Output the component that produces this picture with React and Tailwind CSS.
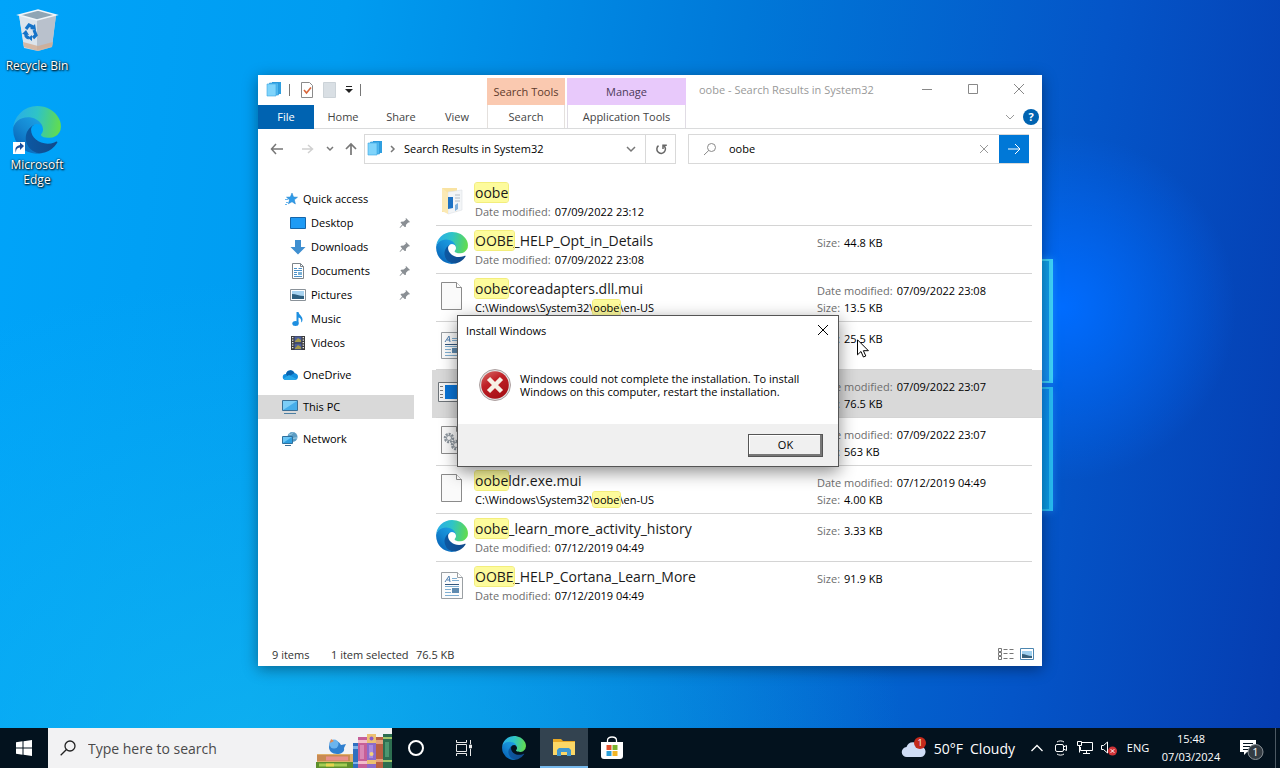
import React, { useId } from 'react';

const EdgeIcon = ({ className }) => {
  const id = useId();
  return (
    <svg className={className} viewBox="4 5 257 257" aria-hidden="true">
      <defs>
        <linearGradient id={`${id}a`} x1="63" y1="178" x2="241" y2="178" gradientUnits="userSpaceOnUse">
          <stop offset="0" stopColor="#0c59a4" />
          <stop offset="1" stopColor="#114a8b" />
        </linearGradient>
        <linearGradient id={`${id}b`} x1="157" y1="100" x2="46" y2="221" gradientUnits="userSpaceOnUse">
          <stop offset="0" stopColor="#1b9de2" />
          <stop offset="0.5" stopColor="#1588d2" />
          <stop offset="1" stopColor="#0a6bbd" />
        </linearGradient>
        <linearGradient id={`${id}c`} x1="20" y1="90" x2="250" y2="130" gradientUnits="userSpaceOnUse">
          <stop offset="0" stopColor="#2ab0e4" />
          <stop offset="0.45" stopColor="#2fc4c6" />
          <stop offset="0.8" stopColor="#4ed27a" />
          <stop offset="1" stopColor="#62dc50" />
        </linearGradient>
      </defs>
      <path fill={`url(#${id}a)`} d="M235.68 195.46a93.73 93.73 0 0 1-10.54 4.71 101.87 101.87 0 0 1-35.9 6.46c-47.32 0-88.54-32.55-88.54-74.32A31.48 31.48 0 0 1 117.13 105c-42.8 1.8-53.8 46.4-53.8 72.53 0 73.88 68.09 81.37 82.76 81.37 7.91 0 19.84-2.3 27-4.56l1.31-.44a128.34 128.34 0 0 0 66.6-52.8 4 4 0 0 0-5.32-5.64Z" />
      <path fill={`url(#${id}b)`} d="M110.34 246.34A79.2 79.2 0 0 1 87.6 225a80.72 80.72 0 0 1 29.53-120c3.12-1.47 8.45-4.13 15.54-4a32.35 32.35 0 0 1 25.69 13 31.88 31.88 0 0 1 6.36 18.66c0-.21 24.46-79.6-80-79.6-43.9 0-80 41.66-80 78.21a130.15 130.15 0 0 0 12.11 56 128 128 0 0 0 156.38 67.11 75.55 75.55 0 0 1-62.78-8Z" />
      <path fill={`url(#${id}c)`} d="M156.94 153.78c-.81 1.05-3.3 2.5-3.3 5.66 0 2.61 1.7 5.12 4.72 7.23 14.38 10 41.49 8.68 41.56 8.68a59.56 59.56 0 0 0 30.27-8.35 61.38 61.38 0 0 0 30.43-52.88c.26-22.41-8-37.31-11.34-43.91C228.09 28.76 182.35 5.19 132.61 5.19a128 128 0 0 0-128 126.2c.48-36.54 36.8-66.05 80-66.05 3.5 0 23.46.34 42 10.07 16.34 8.58 24.9 18.94 30.85 29.21 6.18 10.67 7.28 24.15 7.28 29.52s-2.74 13.33-7.8 19.64Z" />
    </svg>
  );
};

const RecycleBinIcon = () => (
  <svg className="w-12 h-12" viewBox="0 0 48 48" aria-hidden="true">
    <path d="M6 8 25 3l18 5-4 32-14 4-14-3Z" fill="#cfd8e2" />
    <path d="m6 8 18 5v30l-13-3Z" fill="#dce4ec" />
    <path d="m43 8-19 5v30l15-4Z" fill="#b9c1cc" />
    <path d="m10 35 1 5 14 4 14-4 1-5-15 4Z" fill="#d3a98d" opacity=".75" />
    <path d="M6 8 25 3l18 5-19 5Z" fill="#8fa5b5" stroke="#f0f5f9" strokeWidth="1.5" />
    <g fill="none" stroke="#1673c8" strokeWidth="3.2">
      <path d="m13 22 3-4 4 2" />
      <path d="m21 23 2 5-3 3" />
      <path d="M16 31c-3-1-4-3-3-5" />
    </g>
    <path d="m17 22 6 1-1-6ZM19 28v6l-4-3ZM9 27l4-4 3 5Z" fill="#1673c8" />
  </svg>
);

const SearchStackIcon = () => (
  <svg className="w-4 h-4 shrink-0 mb-[2px]" viewBox="0 0 16 16" aria-hidden="true">
    <path d="M6 1h9v12H6z" fill="#2f9fe0" />
    <path d="M3.500 2h9v12h-9z" fill="#4fb8ef" stroke="#2691d4" strokeWidth=".6" />
    <path d="M1 3h9v12H1z" fill="#80d4fb" stroke="#3aa5e2" strokeWidth=".6" />
  </svg>
);

const PinIcon = () => (
  <svg className="w-3 h-3 shrink-0" viewBox="0 0 12 12" aria-hidden="true">
    <path d="m7 1 4 4-1 .6-.8-.1L7 7.700l-.2 2.300L5.700 10 3.800 8.200 1 11l-.4-.4 2.600-3L1.500 5.500l.6-.8 2.600-.1L7 2.500l-.4-1Z" fill="#8a8f94" />
  </svg>
);

const navIcons = {
  star: (
    <>
      <path d="m10 2 1.500 4 4 .2-3.200 2.600 1.100 4.200-3.400-2.200-3.700 2 1.300-3.900L4.500 6.200l3.800-.2Z" fill="#2f9be8" stroke="#1f80cc" strokeWidth=".5" />
      <path d="M3 8.500h3M4 11.500h2M3 13.500h2" stroke="#6ab7ee" />
    </>
  ),
  desktop: <path d="M.5 2.500h15v11H.5z" fill="#1e9bf5" stroke="#1565a9" />,
  downloads: <path d="M5 1h6v7h4.500L8 15.500.5 8H5Z" fill="#3f8fd0" />,
  documents: (
    <>
      <path d="M2.500.5h8l3 3v12h-11z" fill="#fff" stroke="#7d858c" />
      <path d="M10.500.5v3h3" fill="none" stroke="#7d858c" />
      <path d="M4 5.500h3M8.500 5.500H12M4 7.500h8M4 9.500h3M4 11.500h3M4 13.500h8" stroke="#4a90c8" />
      <path d="M8 9h4v3H8z" fill="#7cb2d6" />
    </>
  ),
  pictures: (
    <>
      <path d="M.5 2.500h15v11H.5z" fill="#fff" stroke="#8a9299" />
      <path d="M2 4h12v8H2z" fill="#a8d3f0" />
      <path d="M2 7c4 0 7 2 12 2v3H2Z" fill="#2d5f7f" />
    </>
  ),
  music: (
    <>
      <path d="M6.500 1h2c.5 3 4 4 4 7.500 0 1.500-.6 2.500-1.300 3 .3-3-.7-4.500-2.700-5v6H6.500Z" fill="#1e8fe0" />
      <ellipse cx="5.500" cy="12.500" rx="3.200" ry="2.500" fill="#1e8fe0" />
    </>
  ),
  videos: (
    <>
      <path d="M1 1h14v14H1z" fill="#3b3b3b" />
      <path d="M4.500 1.500h7v6h-7zM4.500 8.500h7v6h-7z" fill="#4c5f9e" />
      <path d="m5 6 3-3 3 2v2H5ZM5 13l3-3 3 2v2H5Z" fill="#a59a4a" />
      <path d="M2.700 2v12M13.300 2v12" stroke="#e6e6e6" strokeWidth="1.400" strokeDasharray="1.300 1.200" />
    </>
  ),
  onedrive: (
    <>
      <path d="M4 7a4.500 4.500 0 0 1 8.500-1c2 .3 3.500 1.700 3.500 3.700S14.500 13 12.500 13H3.500A3 3 0 0 1 4 7Z" fill="#1490df" />
      <path d="M4 7a4.500 4.500 0 0 1 8.500-1L6 10Z" fill="#0a62ad" />
      <path d="M1.500 11.500 7 8l7.500 4-2 1h-9Z" fill="#28a8ea" />
    </>
  ),
  pc: (
    <>
      <path d="M.5 1.500h15v10H.5z" fill="#7ccdf7" stroke="#3a6f96" />
      <path d="M1 11 15 2v9Z" fill="#46adea" />
      <path d="M2 14.500h12" stroke="#4c7ea2" />
    </>
  ),
  network: (
    <>
      <circle cx="10.500" cy="6" r="5" fill="#5b9cc4" />
      <path d="M7 3c2 1 3 0 4-1.500M9 9c2-2 3-2 6-2" stroke="#a9d5e8" fill="none" />
      <path d="M.5 5.500h10v7H.5z" fill="#6cc6f5" stroke="#2f709d" />
      <path d="M1 12 10 6v6Z" fill="#2f9fe0" />
      <path d="M3 14.500h6" stroke="#3a6f96" />
    </>
  ),
};

const NavIcon = ({ name }) => (
  <svg className="w-4 h-4 shrink-0" viewBox="0 0 16 16" aria-hidden="true">{navIcons[name]}</svg>
);

const FileIcon = ({ type }) => {
  if (type === 'edge') {
    return <EdgeIcon className="w-8 h-8" />;
  }
  return (
    <svg className="w-8 h-8" viewBox="0 0 32 32" aria-hidden="true">
      {type === 'folder' && (
        <>
          <path d="M6 4h15v24H6z" fill="#f9e3a2" />
          <path d="m12 8 14-2v20l-14 4Z" fill="#f3f5f7" stroke="#dde1e5" strokeWidth=".6" />
          <path d="M12 13h5v11l-5 1Z" fill="#1d72c4" />
          <path d="M19 11h5M19 14h5M19 17h5" stroke="#b4bcc4" />
          <path d="m6 4 6 5v21l-6-3Z" fill="#fbe9b4" />
          <path d="m19 21 3-2v6l-3 2Z" fill="#7fb0dc" />
        </>
      )}
      {(type === 'blank' || type === 'config') && (
        <>
          <path d="M5.500 2.500h15l5 5v22h-20z" fill="#fafafa" stroke="#8b8b8b" />
          <path d="M20.500 2.500v5h5" fill="#fff" stroke="#8b8b8b" />
        </>
      )}
      {type === 'doc' && (
        <>
          <path d="M5.500 4.500h16l5 5v21h-21z" fill="#fcfcfc" stroke="#9a9fa3" />
          <path d="M21.500 4.500v5h5" fill="#fff" stroke="#9a9fa3" />
          <path d="m9 14 4-6 1 6M11 12h3" fill="none" stroke="#4f7fb0" />
          <path d="M16 10.500h5M16 12.500h7M9 18.500h14M9 21.500h6M9 24.500h6M9 27.500h14" stroke="#7fafd2" />
          <path d="M9 16.500h14" stroke="#34567c" />
          <path d="M16 20h7v5h-7z" fill="#5f8bb0" />
        </>
      )}
      {type === 'config' && (
        <g fill="none" stroke="#8e979f">
          <circle cx="13" cy="14" r="4" strokeWidth="2.500" strokeDasharray="2 1" />
          <circle cx="13" cy="14" r="2.500" />
          <circle cx="20" cy="21" r="4" strokeWidth="2.500" strokeDasharray="2 1" />
          <circle cx="20" cy="21" r="2.500" />
        </g>
      )}
      {type === 'exe' && (
        <>
          <path d="M2.500 6.500h28v19h-28z" fill="#f4f4f4" stroke="#6d7378" />
          <path d="M9 9h19v14H9z" fill="#0a74d6" />
          <path d="M4 10.500h3M4 14.500h3M4 18.500h3M4 21.500h3" stroke="#777" />
        </>
      )}
    </svg>
  );
};

const Mark = ({ children }) => (
  <mark className="bg-[#fdfb9c] text-inherit rounded-xs outline outline-[#f3ee7c]">{children}</mark>
);

const Field = ({ label, value }) => (
  <p className="flex gap-1 text-[11px] leading-[17px] whitespace-nowrap">
    <span className="text-[#6d6d6d]">{label}:</span>
    <span className="text-black">{value}</span>
  </p>
);

const results = [
  { icon: 'folder', hit: 'oobe', rest: '', date: '07/09/2022 23:12' },
  { icon: 'edge', hit: 'OOBE', rest: '_HELP_Opt_in_Details', date: '07/09/2022 23:08', size: '44.8 KB' },
  { icon: 'blank', hit: 'oobe', rest: 'coreadapters.dll.mui', date: '07/09/2022 23:08', size: '13.5 KB', inFolder: true },
  { icon: 'doc', hit: 'OOBE', rest: '_HELP_Opt_in_Details', date: '07/09/2022 23:08', size: '25.5 KB' },
  { icon: 'exe', hit: 'oobe', rest: 'ldr.exe', date: '07/09/2022 23:07', size: '76.5 KB', inFolder: true, selected: true },
  { icon: 'config', hit: 'oobe', rest: 'coreadapters.dll', date: '07/09/2022 23:07', size: '563 KB', inFolder: true },
  { icon: 'blank', hit: 'oobe', rest: 'ldr.exe.mui', date: '07/12/2019 04:49', size: '4.00 KB', inFolder: true },
  { icon: 'edge', hit: 'oobe', rest: '_learn_more_activity_history', date: '07/12/2019 04:49', size: '3.33 KB' },
  { icon: 'doc', hit: 'OOBE', rest: '_HELP_Cortana_Learn_More', date: '07/12/2019 04:49', size: '91.9 KB' },
];

const ResultRow = ({ item }) => (
  <li className={`group pl-1 ${item.selected ? 'bg-[#d9d9d9]' : 'pr-[10px]'}`}>
    <div className="flex h-12 border-b border-[#d4d4d4] group-last:border-transparent">
      <div className="pt-[6px] w-[39px] shrink-0">
        <FileIcon type={item.icon} />
      </div>
      <div className="w-[342px] shrink-0 pt-[5px]">
        <h3 className="text-[14px] leading-[20px] text-[#1a1a1a]">
          <Mark>{item.hit}</Mark>{item.rest}
        </h3>
        {item.inFolder ? (
          <p className="text-[11px] leading-[17px] text-black">
            C:\Windows\System32\<Mark>oobe</Mark>\en-US
          </p>
        ) : (
          <Field label="Date modified" value={item.date} />
        )}
      </div>
      <div className="pt-2">
        {item.inFolder && <Field label="Date modified" value={item.date} />}
        {item.size && <Field label="Size" value={item.size} />}
      </div>
    </div>
  </li>
);

const quickItems = [
  { name: 'Desktop', icon: 'desktop', pinned: true },
  { name: 'Downloads', icon: 'downloads', pinned: true },
  { name: 'Documents', icon: 'documents', pinned: true },
  { name: 'Pictures', icon: 'pictures', pinned: true },
  { name: 'Music', icon: 'music' },
  { name: 'Videos', icon: 'videos' },
];

const Sidebar = () => (
  <nav className="w-[156px] shrink-0 pt-[18px] text-black">
    <a href="#quick" className="flex items-center gap-[5px] h-6 pl-6"><NavIcon name="star" />Quick access</a>
    {quickItems.map((item) => (
      <a key={item.name} href={`#${item.icon}`} className="flex items-center gap-[5px] h-6 pl-8 pr-[3px]">
        <NavIcon name={item.icon} />
        <span className="flex-1">{item.name}</span>
        {item.pinned && <PinIcon />}
      </a>
    ))}
    <a href="#onedrive" className="flex items-center gap-[5px] h-6 pl-6 mt-2"><NavIcon name="onedrive" />OneDrive</a>
    <a href="#pc" className="flex items-center gap-[5px] h-6 pl-6 mt-2 bg-[#d9d9d9]"><NavIcon name="pc" />This PC</a>
    <a href="#network" className="flex items-center gap-[5px] h-6 pl-6 mt-2"><NavIcon name="network" />Network</a>
  </nav>
);

const Ribbon = () => (
  <header className="flex h-[54px] border-b border-[#dadbdc] text-[#444]">
    <div className="w-[229px] shrink-0">
      <div className="flex items-center h-[30px] pl-2 gap-[7px]">
        <SearchStackIcon />
        <span className="w-px h-3 bg-[#777]" />
        <button aria-label="Properties" className="ml-[2px]">
          <svg className="w-4 h-4" viewBox="0 0 16 16">
            <path d="M2.500.5h8l3 3v12h-11z" fill="#fff" stroke="#8a8a8a" />
            <path d="m5 8 2.500 3L12 5.500" fill="none" stroke="#d9663a" strokeWidth="1.600" />
          </svg>
        </button>
        <button aria-label="New folder">
          <svg className="w-4 h-4" viewBox="0 0 16 16">
            <path d="M1.500.5h12v15h-12z" fill="#d9dfe4" stroke="#ccd3d8" />
          </svg>
        </button>
        <button aria-label="Customise toolbar">
          <svg className="w-2 h-2" viewBox="0 0 8 8">
            <path d="M1 0h6v1H1zM0 3h8L4 7Z" fill="#222" />
          </svg>
        </button>
        <span className="w-px h-3 bg-[#777]" />
      </div>
      <div className="flex h-6">
        <button className="w-14 bg-[#0063b1] text-white">File</button>
        <button className="w-[58px]">Home</button>
        <button className="w-[58px]">Share</button>
        <button className="w-[54px]">View</button>
      </div>
    </div>
    <div className="w-[78px] shrink-0 pt-[3px]">
      <div className="h-[27px] flex items-center justify-center pt-px bg-[#fac9b0] text-[#5f3b2c]">Search Tools</div>
      <button className="w-full h-[23px] pt-px border-x border-[#e4e0dd]">Search</button>
    </div>
    <div className="w-[119px] shrink-0 pt-[3px] ml-[2px]">
      <div className="h-[27px] flex items-center justify-center pt-px bg-[#e8c9fb] text-[#4d3a59]">Manage</div>
      <button className="w-full h-[23px] pt-px border-x border-[#e0dce4]">Application Tools</button>
    </div>
    <div className="flex-1 min-w-0">
      <div className="flex items-center h-[30px] pl-[13px]">
        <h1 className="flex-1 truncate text-[#999]">oobe - Search Results in System32</h1>
        <div className="flex text-[#888]">
          <button aria-label="Minimise" className="w-[46px] flex justify-center">
            <svg className="w-3 h-3" viewBox="0 0 12 12" stroke="currentColor"><path d="M1 5.500h10" /></svg>
          </button>
          <button aria-label="Maximise" className="w-[46px] flex justify-center">
            <svg className="w-3 h-3" viewBox="0 0 12 12" stroke="currentColor" fill="none"><path d="M1.500.5h9v9h-9z" /></svg>
          </button>
          <button aria-label="Close" className="w-[46px] flex justify-center">
            <svg className="w-3 h-3" viewBox="0 0 12 12" stroke="currentColor"><path d="m1 0 10 10M11 0 1 10" /></svg>
          </button>
        </div>
      </div>
      <div className="flex items-center justify-end gap-2 h-[23px] pr-[3px]">
        <button aria-label="Expand ribbon">
          <svg className="w-[10px] h-[10px]" viewBox="0 0 10 10" fill="none" stroke="#999"><path d="m1 3 4 4 4-4" /></svg>
        </button>
        <button aria-label="Help" className="w-4 h-4 rounded-full bg-[#0063b1] text-white font-bold leading-4">?</button>
      </div>
    </div>
  </header>
);

const AddressRow = () => (
  <div className="flex items-center h-10 pr-[13px]">
    <div className="flex items-center w-[106px] shrink-0 pl-3 text-[#777]">
      <button aria-label="Back">
        <svg className="w-[14px] h-[14px]" viewBox="0 0 14 14" fill="none" stroke="currentColor" strokeWidth="1.500"><path d="M13 7H1.500M6 2 1.500 7 6 12" /></svg>
      </button>
      <button aria-label="Forward" className="ml-4">
        <svg className="w-[14px] h-[14px]" viewBox="0 0 14 14" fill="none" stroke="#d0d0d0" strokeWidth="1.500"><path d="M2 7h10.500M8 3l4.500 4L8 11" /></svg>
      </button>
      <button aria-label="Recent locations" className="ml-3">
        <svg className="w-2 h-2" viewBox="0 0 8 8" fill="none" stroke="currentColor" strokeWidth="1.500"><path d="m1 2 3 3 3-3" /></svg>
      </button>
      <button aria-label="Up" className="ml-[10px]">
        <svg className="w-[14px] h-[14px]" viewBox="0 0 14 14" fill="none" stroke="currentColor" strokeWidth="1.700"><path d="M7 13V2M2 7l5-5 5 5" /></svg>
      </button>
    </div>
    <div className="flex flex-1 items-center h-[30px] border border-[#d9d9d9] pl-[2px]">
      <SearchStackIcon />
      <svg className="w-2 h-2 mx-[6px]" viewBox="0 0 8 8" fill="none" stroke="#777" strokeWidth="1.500"><path d="m2 1 3 3-3 3" /></svg>
      <input aria-label="Address" className="flex-1 min-w-0 px-px text-black outline-none" defaultValue="Search Results in System32" />
      <button aria-label="Previous locations" className="w-7 flex justify-center">
        <svg className="w-[10px] h-[10px]" viewBox="0 0 10 10" fill="none" stroke="#777" strokeWidth="1.500"><path d="m1 3 4 4 4-4" /></svg>
      </button>
      <button aria-label="Refresh" className="w-[30px] h-full flex items-center justify-center border-l border-[#d9d9d9]">
        <svg className="w-3 h-3" viewBox="0 0 12 12" fill="none" stroke="#666" strokeWidth="1.500">
          <path d="M8.500 2.500a4.300 4.300 0 1 1-5 .2" />
          <path d="M8 6V2.200H11.800" />
        </svg>
      </button>
    </div>
    <div className="flex items-center w-[341px] h-[30px] ml-3 border border-[#d9d9d9] border-r-0">
      <svg className="w-[14px] h-[14px] ml-[14px] mr-3" viewBox="0 0 14 14" fill="none" stroke="#8a8a8a">
        <circle cx="8.500" cy="5.500" r="4" />
        <path d="M5.700 8.500 1 13" />
      </svg>
      <input aria-label="Search" className="flex-1 min-w-0 text-black outline-none" defaultValue="oobe" />
      <button aria-label="Clear" className="w-[30px] flex justify-center">
        <svg className="w-[10px] h-[10px]" viewBox="0 0 10 10" stroke="#999"><path d="m1 1 8 8M9 1 1 9" /></svg>
      </button>
      <button aria-label="Go" className="w-[30px] h-7 flex items-center justify-center bg-[#0078d7]">
        <svg className="w-[14px] h-[14px]" viewBox="0 0 14 14" fill="none" stroke="#fff"><path d="M1 7h12M8 2l5 5-5 5" /></svg>
      </button>
    </div>
  </div>
);

const ExplorerWindow = () => (
  <section className="absolute left-[258px] right-[238px] top-[75px] bg-white text-[11px] shadow-[0_3px_14px_rgba(0,0,0,0.4)]">
    <Ribbon />
    <AddressRow />
    <div className="flex min-h-[475px]">
      <Sidebar />
      <ul className="flex-1 min-w-0 ml-[18px] pt-[9px]">
        {results.map((item, i) => <ResultRow key={i} item={item} />)}
      </ul>
    </div>
    <footer className="flex items-center h-[22px] pl-[14px] pr-2 text-[#333]">
      <span className="w-[59px]">9 items</span>
      <span className="w-[85px] whitespace-nowrap">1 item selected</span>
      <span className="flex-1">76.5 KB</span>
      <button aria-label="Details view" className="mr-[6px]">
        <svg className="w-4 h-4" viewBox="0 0 16 16" fill="none" stroke="#777">
          <path d="M.5 1.500h3v3h-3zM.5 5.500h3v3h-3zM.5 9.500h3v3h-3z" />
          <path d="M5.500 2.500h4M11.500 2.500h4M5.500 6.500h4M11.500 6.500h4M5.500 11.500h4M11.500 11.500h4" />
        </svg>
      </button>
      <button aria-label="Thumbnail view">
        <svg className="w-[14px] h-4" viewBox="0 0 14 16">
          <path d="M.5 1.500h13v11H.5z" fill="#fff" stroke="#4c86b0" />
          <path d="M2 4h10v7H2z" fill="#9fd0ef" />
          <path d="M2 7c3 0 6 2 10 2v2H2Z" fill="#37607b" />
        </svg>
      </button>
    </footer>
  </section>
);

const ErrorDialog = () => (
  <section role="dialog" aria-label="Install Windows" className="absolute left-[457px] top-[315px] w-[382px] border border-[#555] bg-white text-[11px] text-black shadow-[0_5px_16px_rgba(0,0,0,0.45)]">
    <div className="flex items-center justify-between h-[30px] pl-2 pr-[9px]">
      <h2>Install Windows</h2>
      <button aria-label="Close dialog">
        <svg className="w-3 h-3" viewBox="0 0 12 12" stroke="#000"><path d="m1 0 10 10M11 0 1 10" /></svg>
      </button>
    </div>
    <div className="flex items-center gap-[9px] h-[78px] pl-[21px]">
      <svg className="w-8 h-8 shrink-0" viewBox="0 0 32 32" aria-hidden="true">
        <defs>
          <linearGradient id="err" x1="0" y1="0" x2="0.6" y2="1">
            <stop offset="0" stopColor="#d9706c" />
            <stop offset="0.45" stopColor="#bf2026" />
            <stop offset="1" stopColor="#a81016" />
          </linearGradient>
        </defs>
        <circle cx="16" cy="16" r="15.500" fill="#e2e2e2" stroke="#9a8a8a" strokeWidth=".8" />
        <circle cx="16" cy="16" r="13.800" fill="url(#err)" />
        <path d="m9.500 9.500 13 13M22.500 9.500l-13 13" stroke="#f6f0e4" strokeWidth="4.500" />
      </svg>
      <p className="leading-[13px]">
        Windows could not complete the installation. To install<br />
        Windows on this computer, restart the installation.
      </p>
    </div>
    <div className="flex justify-end h-[42px] bg-[#f0f0f0] pt-[10px] pr-[15px]">
      <button className="w-[75px] h-[23px] bg-[#f0f0f0] border border-[#555] shadow-[inset_-2px_-2px_0_#777,inset_1px_1px_0_#fff]">OK</button>
    </div>
  </section>
);

const Books = () => (
  <svg className="w-[76px] h-10 shrink-0" viewBox="0 0 76 40" aria-hidden="true">
    <path d="M1 26h36v8H1z" fill="#e0b06a" />
    <path d="M1 27h33v6H1z" fill="#c98a52" />
    <path d="M10 28.500h22v4H10z" fill="#e88f8c" />
    <path d="M0 34h37v6H0z" fill="#5d8f2c" />
    <path d="M3 35.500h28v3H3z" fill="#a4cc54" />
    <path d="M10 35.500h8v3h-8z" fill="#e6d44e" />
    <path d="M14 13c4-2 9 0 11 4l5-1-2 4c1 4-3 6-7 6-5 0-8-3-8-7Z" fill="#2f80cf" />
    <circle cx="18" cy="16" r="4.500" fill="#6bb4ee" />
    <path d="m15 11 3 2-4 2Z" fill="#e9894b" />
    <path d="M37 15h5v25h-5z" fill="#2f6fc0" />
    <path d="M37 18h5v3h-5zM37 34h5v2h-5z" fill="#7fb2e8" />
    <path d="M42 9h9v31h-9z" fill="#c65f98" />
    <path d="M42 12h9v3h-9zM42 33h9v3h-9z" fill="#f2bccb" />
    <path d="M44 17h4v14h-4z" fill="#d987b5" />
    <path d="M51 6h9v34h-9z" fill="#8d6bc9" />
    <path d="M51 6h9v9h-9zM51 32h9v4h-9z" fill="#ecc070" />
    <path d="M53 17h4v13h-4z" fill="#a98be0" />
    <circle cx="55.500" cy="26" r="2" fill="#f3d27c" />
    <circle cx="55.500" cy="10.500" r="2" fill="#8a5ac8" />
    <path d="M60 9h7v31h-7z" fill="#b95f42" />
    <path d="M60 12h7v4h-7zM60 31h7v3h-7z" fill="#e3a07c" />
    <path d="M67 6h9v34h-9z" fill="#2d6e50" />
    <path d="M67 9h9v2h-9zM67 32h9v2h-9z" fill="#a3c66a" />
    <path d="M69 14h4v15h-4z" fill="#4b9670" />
  </svg>
);

const Taskbar = () => (
  <footer className="flex h-10 bg-[#03121e] text-white">
    <button aria-label="Start" className="w-12 flex items-center justify-center">
      <svg className="w-4 h-4" viewBox="0 0 16 16" fill="#fff"><path d="m0 2.200 6.500-.9v6.200H0zM7.500 1.200 16 0v7.500H7.500zM0 8.500h6.500v6.200L0 13.800zM7.500 8.500H16V16l-8.500-1.200z" /></svg>
    </button>
    <label className="flex items-center w-[344px] bg-[#f2f2f3] text-[#444] pl-3">
      <svg className="w-4 h-4 mr-3" viewBox="0 0 16 16" fill="none" stroke="#222" strokeWidth="1.300">
        <circle cx="10" cy="6" r="5" />
        <path d="M6.500 9.500.7 15.300" />
      </svg>
      <input aria-label="Type here to search" placeholder="Type here to search" className="flex-1 min-w-0 text-[14px] outline-none placeholder:text-[#4a4a4a]" />
      <Books />
    </label>
    <button aria-label="Cortana" className="w-12 flex items-center justify-center">
      <span className="w-4 h-4 rounded-full border-2 border-white" />
    </button>
    <button aria-label="Task view" className="w-12 flex items-center justify-center">
      <svg className="w-4 h-4" viewBox="0 0 16 16" fill="none" stroke="#e8e8e8">
        <path d="M.5 0v2.500h10V0M.5 16v-2.500h10V16M.5 4.500h10v7H.5zM14.500 0v4M14.500 9v7" />
        <path d="M13.500 5h2v3h-2z" fill="#e8e8e8" />
      </svg>
    </button>
    <button aria-label="Edge" className="w-[52px] flex items-center justify-center"><EdgeIcon className="w-6 h-6" /></button>
    <button aria-label="File Explorer" className="w-12 flex items-center justify-center bg-[#334350] border-b-2 border-[#76b9ed]">
      <svg className="w-[22px] h-5" viewBox="0 0 22 20">
        <path d="M0 2h8l2 2h12v14H0Z" fill="#e8a825" />
        <path d="M0 5h22v13H0Z" fill="#fbd766" />
        <path d="M4 19v-6l2-2h10l2 2v6h-4v-4H8v4Z" fill="#3f97cf" />
      </svg>
    </button>
    <button aria-label="Store" className="w-12 flex items-center justify-center">
      <svg className="w-6 h-6" viewBox="0 0 24 24">
        <path d="M7.500 6V4.500C7.500 2 9.500 1 12 1s4.500 1 4.500 3.500V6" fill="none" stroke="#fff" strokeWidth="1.300" />
        <path d="M1 6h22v14a3 3 0 0 1-3 3H4a3 3 0 0 1-3-3Z" fill="#fff" />
        <path d="M6.500 9H11.500v5H6.500z" fill="#e2502c" />
        <path d="M12.500 9h5v5h-5z" fill="#7bb32e" />
        <path d="M6.500 15H11.500v5H6.500z" fill="#2a9fd8" />
        <path d="M12.500 15h5v5h-5z" fill="#f2b526" />
      </svg>
    </button>
    <button className="ml-auto mr-[10px] flex items-center gap-[7px] text-[14px] whitespace-nowrap">
      <svg className="w-[26px] h-6" viewBox="0 0 26 24">
        <path d="M6 21a5 5 0 0 1-.5-10 7 7 0 0 1 13-.5A5.300 5.300 0 0 1 20 21Z" fill="#cfdcf5" />
        <circle cx="19" cy="7" r="6" fill="#c42b1c" />
        <text x="19" y="10" fontSize="9" fill="#fff" textAnchor="middle">1</text>
      </svg>
      <span>50°F</span>
      <span>Cloudy</span>
    </button>
    <button aria-label="Show hidden icons" className="w-6 flex items-center justify-center">
      <svg className="w-3 h-3" viewBox="0 0 12 12" fill="none" stroke="#fff" strokeWidth="1.300"><path d="m.5 9 5.500-5.500L11.500 9" /></svg>
    </button>
    <button aria-label="Meet now" className="w-6 flex items-center justify-center">
      <svg className="w-4 h-4" viewBox="0 0 16 16" fill="none" stroke="#fff">
        <rect x="2.500" y="4.500" width="8" height="7" rx="1.500" />
        <path d="m10.500 7 3-1.500v5L10.500 9M4 2c2-1.500 5-1.500 7 0M4 14c2 1.500 5 1.500 7 0" />
      </svg>
    </button>
    <button aria-label="Network" className="w-6 flex items-center justify-center">
      <svg className="w-4 h-4" viewBox="0 0 16 16" fill="none" stroke="#fff">
        <path d="M5 2.500h10.500v8h-12V7M.5 1.500h4v4h-4zM2.500 5.500v7M9.500 10.500v3M6 13.500h7" />
      </svg>
    </button>
    <button aria-label="Volume muted" className="w-6 flex items-center justify-center">
      <svg className="w-4 h-4" viewBox="0 0 16 16">
        <path d="M.5 5.500h2L6.500 2v11l-4-3.500h-2Z" fill="none" stroke="#fff" />
        <circle cx="11.500" cy="11" r="4.500" fill="#d13438" />
        <path d="m9.700 9.200 3.600 3.600M13.300 9.200l-3.600 3.600" stroke="#fff" />
      </svg>
    </button>
    <button className="w-[34px] text-[11px]">ENG</button>
    <button className="w-[72px] text-[11px] leading-[18px]">15:48<br />07/03/2024</button>
    <button aria-label="Notifications" className="w-12 flex items-center justify-center">
      <svg className="w-[26px] h-6" viewBox="0 0 26 24">
        <path d="M2 4h16v12H9l-3 3v-3H2Z" fill="#fff" />
        <path d="M5 7.500h10M5 10.500h10M5 13.500h6" stroke="#03121e" />
        <circle cx="17.500" cy="16" r="7.500" fill="#343c43" stroke="#8b9298" />
        <text x="17.500" y="20" fontSize="11" fill="#fff" textAnchor="middle">1</text>
      </svg>
    </button>
    <button aria-label="Show desktop" className="w-[5px] border-l border-[#4c5963]" />
  </footer>
);

const labelShadow = '[text-shadow:1px_1px_2px_#000,0_0_2px_#000]';

export default function App() {
  return (
    <div className="relative min-h-screen flex flex-col overflow-hidden font-['Open_Sans',sans-serif] bg-[radial-gradient(circle_at_83%_40%,#006cff_0%,rgba(0,108,255,0)_15%),radial-gradient(ellipse_at_20%_100%,rgba(20,184,240,0.7)_0%,rgba(20,184,240,0)_45%),linear-gradient(98deg,#00a4fa_0%,#009cf0_25%,#0078d8_54%,#0455c8_80%,#053cb0_100%)]">
      {/* panes of the wallpaper's window, mostly hidden behind Explorer */}
      <div className="absolute left-[900px] top-[259px] w-[153px] h-[124px] border-2 border-r-4 border-[#3fd4fa] bg-linear-to-b from-[#109fe8] to-[#1590f5] shadow-[0_0_8px_#1a90ff]" />
      <div className="absolute left-[900px] top-[387px] w-[153px] h-[124px] border-2 border-r-4 border-[#28bdf4] bg-linear-to-b from-[#0c8cf0] to-[#0a9ae4] shadow-[0_0_8px_#1a80f0]" />

      <main className="flex-1">
        <div className="w-[74px] flex flex-col pt-[7px] text-[12px] leading-[15px] text-white text-center">
          <a href="#bin" className={`flex flex-col items-center h-[99px] ${labelShadow}`}>
            <RecycleBinIcon />
            <span className="mt-[3px]">Recycle Bin</span>
          </a>
          <a href="#edge" className={`flex flex-col items-center ${labelShadow}`}>
            <span className="relative">
              <EdgeIcon className="w-12 h-12" />
              <svg className="absolute left-0 bottom-0 w-3 h-3 bg-white" viewBox="0 0 12 12">
                <path d="M3 11c0-4 1-5 4-5.500V8l4-4-4-3.500V3C3 4 1.500 6 3 11Z" fill="#1b4f9c" />
              </svg>
            </span>
            <span className="mt-[3px]">Microsoft<br />Edge</span>
          </a>
        </div>
        <ExplorerWindow />
        <ErrorDialog />
        <svg className="absolute left-[857px] top-[339px] w-3 h-[19px]" viewBox="0 0 12 19" aria-hidden="true">
          <path d="M.5.8v15l3.500-3.300 2.400 5.500 2.400-1-2.400-5.300h5Z" fill="#fff" stroke="#000" />
        </svg>
      </main>
      <Taskbar />
    </div>
  );
}
